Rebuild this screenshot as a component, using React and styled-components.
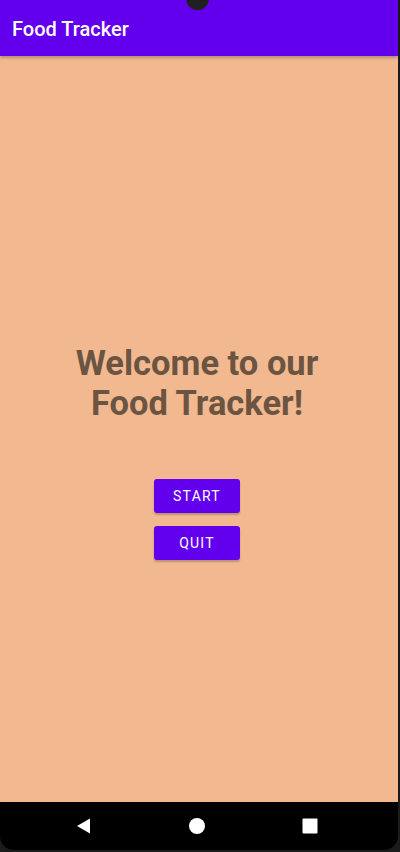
import React from 'react';
import styled, { createGlobalStyle } from 'styled-components';

const GlobalStyle = createGlobalStyle`
  html, body {
    margin: 0;
    padding: 0;
    background: #1b1b1b;
  }
  body {
    font-family: Roboto, "Noto Sans", sans-serif;
  }
`;

const Phone = styled.div`
  position: relative;
  width: 400px;
  height: 852px;
  display: flex;
  flex-direction: column;
  overflow: hidden;
  background: #1b1b1b;
`;

const Camera = styled.div`
  position: absolute;
  top: -13px;
  left: 186px;
  width: 23px;
  height: 23px;
  border-radius: 50%;
  background: #202020;
  z-index: 5;
`;

const AppBar = styled.header`
  height: 56px;
  flex: none;
  display: flex;
  align-items: center;
  padding: 0 12px;
  margin-right: 2px;
  background: #6200ee;
  box-shadow: 0 2px 3px rgba(0, 0, 0, 0.25);
  z-index: 2;
`;

const AppTitle = styled.h1`
  margin: 0;
  padding-top: 2px;
  font-size: 20px;
  font-weight: 500;
  color: #ffffff;
`;

const Content = styled.main`
  flex: 1;
  margin-right: 2px;
  padding: 44px 4px 0 0;
  background: #f2b991;
  display: flex;
  flex-direction: column;
  align-items: center;
  justify-content: center;
`;

const Heading = styled.h2`
  margin: 0 0 56px;
  font-size: 34.5px;
  line-height: 40px;
  font-weight: 700;
  text-align: center;
  color: #6c5442;
`;

const ButtonStack = styled.div`
  display: flex;
  flex-direction: column;
  gap: 13px;
`;

const Button = styled.button`
  width: 86px;
  height: 34px;
  border: none;
  border-radius: 3px;
  background: #6200ee;
  color: #ffffff;
  font-family: Roboto, sans-serif;
  font-size: 14px;
  font-weight: 400;
  letter-spacing: 1.25px;
  box-shadow: 0 2px 2px rgba(0, 0, 0, 0.22);
  cursor: pointer;
`;

const NavBar = styled.nav`
  height: 48px;
  flex: none;
  margin-right: 2px;
  margin-bottom: 2px;
  padding-right: 4px;
  background: #000000;
  border-radius: 0 0 14px 14px;
  display: flex;
  align-items: center;
  justify-content: center;
  gap: 95px;
`;

const NavIcon = styled.svg`
  display: block;
`;

export default function App() {
  return (
    <>
      <GlobalStyle />
      <Phone>
        <Camera />
        <AppBar>
          <AppTitle>Food Tracker</AppTitle>
        </AppBar>
        <Content>
          <Heading>
            Welcome to our
            <br />
            Food Tracker!
          </Heading>
          <ButtonStack>
            <Button>START</Button>
            <Button>QUIT</Button>
          </ButtonStack>
        </Content>
        <NavBar>
          <NavIcon width="18" height="18" viewBox="0 0 18 18">
            <path d="M15 1.5 L15 16.5 L2 9 Z" fill="#fff" />
          </NavIcon>
          <NavIcon width="18" height="18" viewBox="0 0 18 18">
            <circle cx="9" cy="9" r="8" fill="#fff" />
          </NavIcon>
          <NavIcon width="18" height="18" viewBox="0 0 18 18">
            <rect x="1.5" y="1.5" width="15" height="15" rx="1" fill="#fff" />
          </NavIcon>
        </NavBar>
      </Phone>
    </>
  );
}
